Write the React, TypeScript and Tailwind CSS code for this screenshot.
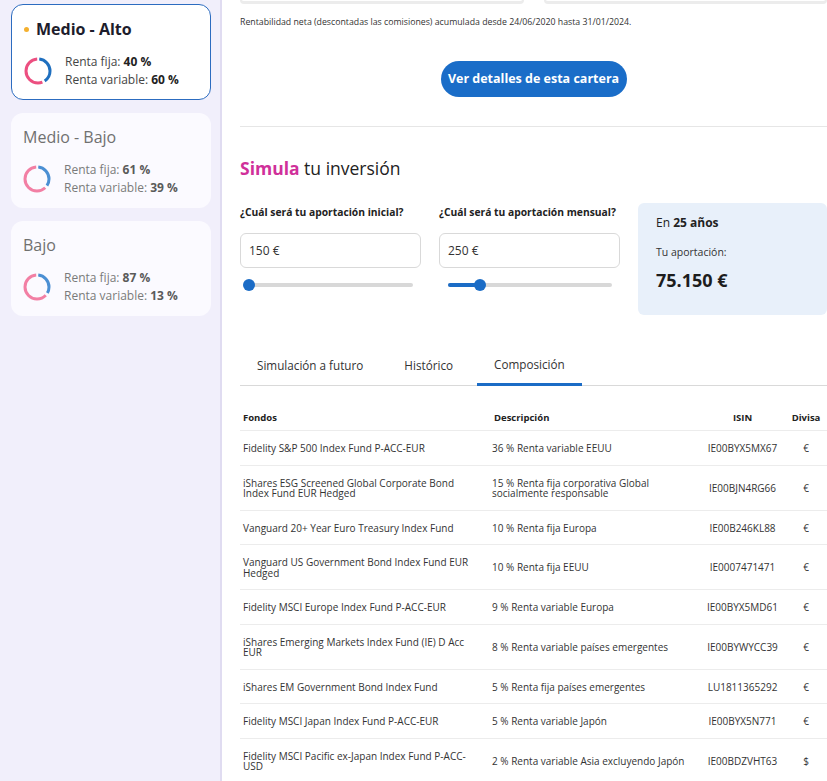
import React from "react";

type Profile = {
  title: string;
  fija: number;
  variable: number;
  selected?: boolean;
  blueFrac: number;
};

const profiles: Profile[] = [
  { title: "Medio - Alto", fija: 40, variable: 60, selected: true, blueFrac: 0.42 },
  { title: "Medio - Bajo", fija: 61, variable: 39, blueFrac: 0.36 },
  { title: "Bajo", fija: 87, variable: 13, blueFrac: 0.35 },
];

function Donut({ blueFrac, selected }: { blueFrac: number; selected?: boolean }) {
  const r = 12;
  const c = 2 * Math.PI * r;
  const gap = 0.035 * c;
  const blueLen = blueFrac * c - gap;
  const pinkLen = (1 - blueFrac) * c - gap;
  const blue = selected ? "#1f6fbf" : "#4b8fd3";
  const pink = selected ? "#ec4f80" : "#f27fa4";
  return (
    <svg width="28" height="28" viewBox="0 0 28 28" className="shrink-0">
      <g transform="rotate(-90 14 14)">
        <circle
          cx="14"
          cy="14"
          r={r}
          fill="none"
          stroke={blue}
          strokeWidth="3"
          strokeDasharray={`${blueLen} ${c - blueLen}`}
          strokeDashoffset={-gap / 2}
        />
        <circle
          cx="14"
          cy="14"
          r={r}
          fill="none"
          stroke={pink}
          strokeWidth="3"
          strokeDasharray={`${pinkLen} ${c - pinkLen}`}
          strokeDashoffset={-(blueFrac * c + gap / 2)}
        />
      </g>
    </svg>
  );
}

function ProfileCard({ p }: { p: Profile }) {
  return (
    <div
      className={
        p.selected
          ? "h-[96px] rounded-[12px] border border-[#2c6cc0] bg-white pt-[13px] pl-[12px]"
          : "h-[95px] rounded-[12px] bg-[#fbfaff] pt-[13px] pl-[12px]"
      }
    >
      <div className="flex h-[22px] items-center">
        {p.selected && <span className="mr-[7px] h-[5px] w-[5px] rounded-full bg-[#f4b02f]" />}
        <span
          className={
            p.selected
              ? "text-[16px] font-bold text-[#1d1d2c]"
              : "text-[16px] text-[#707070]"
          }
        >
          {p.title}
        </span>
      </div>
      <div className="mt-[13px] flex items-center gap-[13px]">
        <Donut blueFrac={p.blueFrac} selected={p.selected} />
        <div
          className={
            p.selected
              ? "text-[12px] leading-[18px] text-[#444]"
              : "text-[12px] leading-[18px] text-[#7a7a7a]"
          }
        >
          <div>
            Renta fija:{" "}
            <span className={p.selected ? "font-bold text-[#222]" : "font-bold text-[#5a5a5a]"}>
              {p.fija} %
            </span>
          </div>
          <div>
            Renta variable:{" "}
            <span className={p.selected ? "font-bold text-[#222]" : "font-bold text-[#5a5a5a]"}>
              {p.variable} %
            </span>
          </div>
        </div>
      </div>
    </div>
  );
}

type Row = { fondo: string[]; desc: string[]; isin: string; divisa: string };

const rows: Row[] = [
  { fondo: ["Fidelity S&P 500 Index Fund P-ACC-EUR"], desc: ["36 % Renta variable EEUU"], isin: "IE00BYX5MX67", divisa: "€" },
  {
    fondo: ["iShares ESG Screened Global Corporate Bond", "Index Fund EUR Hedged"],
    desc: ["15 % Renta fija corporativa Global", "socialmente responsable"],
    isin: "IE00BJN4RG66",
    divisa: "€",
  },
  { fondo: ["Vanguard 20+ Year Euro Treasury Index Fund"], desc: ["10 % Renta fija Europa"], isin: "IE00B246KL88", divisa: "€" },
  {
    fondo: ["Vanguard US Government Bond Index Fund EUR", "Hedged"],
    desc: ["10 % Renta fija EEUU"],
    isin: "IE0007471471",
    divisa: "€",
  },
  { fondo: ["Fidelity MSCI Europe Index Fund P-ACC-EUR"], desc: ["9 % Renta variable Europa"], isin: "IE00BYX5MD61", divisa: "€" },
  {
    fondo: ["iShares Emerging Markets Index Fund (IE) D Acc", "EUR"],
    desc: ["8 % Renta variable países emergentes"],
    isin: "IE00BYWYCC39",
    divisa: "€",
  },
  { fondo: ["iShares EM Government Bond Index Fund"], desc: ["5 % Renta fija países emergentes"], isin: "LU1811365292", divisa: "€" },
  { fondo: ["Fidelity MSCI Japan Index Fund P-ACC-EUR"], desc: ["5 % Renta variable Japón"], isin: "IE00BYX5N771", divisa: "€" },
  {
    fondo: ["Fidelity MSCI Pacific ex-Japan Index Fund P-ACC-", "USD"],
    desc: ["2 % Renta variable Asia excluyendo Japón"],
    isin: "IE00BDZVHT63",
    divisa: "$",
  },
];

function Lines({ lines }: { lines: string[] }) {
  return (
    <div className="whitespace-nowrap">
      {lines.map((l, i) => (
        <div key={i}>{l}</div>
      ))}
    </div>
  );
}

function Slider({ pct }: { pct: number }) {
  return (
    <div className="relative ml-[9px] mt-[11px] h-[11px] w-[164px]">
      <div className="absolute left-0 right-0 top-[4px] h-[4px] rounded-full bg-[#d8d8d8]" />
      <div
        className="absolute left-0 top-[4px] h-[4px] rounded-full bg-[#1b6cc6]"
        style={{ width: `${pct}%` }}
      />
      <div
        className="absolute top-0 h-[12px] w-[12px] -translate-x-1/2 rounded-full bg-[#1b6cc6]"
        style={{ left: `${pct}%` }}
      />
    </div>
  );
}

export default function App() {
  return (
    <div
      className="flex h-[781px] w-[827px] overflow-hidden bg-white text-[#222]"
      style={{ fontFamily: '"Open Sans", "Noto Sans", sans-serif' }}
    >
      <aside className="flex h-full w-[222px] shrink-0 flex-col gap-[13px] border-r-[2px] border-[#e0dcf1] bg-[#f1effb] pl-[11px] pr-[9px] pt-[4px]">
        {profiles.map((p) => (
          <ProfileCard key={p.title} p={p} />
        ))}
      </aside>

      <main className="w-[605px] shrink-0 overflow-hidden pl-[18px]">
        <div className="w-[587px]">
          <div className="flex h-[4px] gap-[20px]">
            <div className="h-[4px] w-[284px] rounded-b-[10px] border-x-2 border-b-[3px] border-[#ececec]" />
            <div className="h-[4px] w-[283px] rounded-b-[10px] border-x-2 border-b-[3px] border-[#ececec]" />
          </div>

          <p className="mt-[12px] text-[8.75px] leading-[12px] text-[#333]">
            Rentabilidad neta (descontadas las comisiones) acumulada desde 24/06/2020 hasta 31/01/2024.
          </p>

          <div className="mt-[33px] flex justify-center">
            <button className="h-[36px] w-[186px] rounded-full bg-[#1a6dc8] text-[12.5px] font-bold text-white">
              Ver detalles de esta cartera
            </button>
          </div>

          <div className="mt-[29px] h-px bg-[#e6e6e6]" />

          <h2 className="mt-[28px] text-[17.5px] leading-[26px] text-[#222]">
            <span className="font-bold text-[#d0309a]">Simula</span> tu inversión
          </h2>

          <div className="mt-[22px] grid grid-cols-[181px_181px_189px] items-start gap-[18px]">
            <div className="pt-px">
              <div className="text-[10.3px] font-bold leading-[16px] text-[#222]">
                ¿Cuál será tu aportación inicial?
              </div>
              <div className="mt-[13px] flex h-[35px] items-center rounded-[6px] border border-[#d9d9d9] pl-[8px] text-[12px] text-[#333]">
                150 €
              </div>
              <Slider pct={0} />
            </div>
            <div className="pt-px">
              <div className="text-[10.3px] font-bold leading-[16px] text-[#222]">
                ¿Cuál será tu aportación mensual?
              </div>
              <div className="mt-[13px] flex h-[35px] items-center rounded-[6px] border border-[#d9d9d9] pl-[8px] text-[12px] text-[#333]">
                250 €
              </div>
              <Slider pct={19.5} />
            </div>
            <div className="h-[112px] rounded-[6px] bg-[#e8f0fa] pl-[18px] pt-[12px]">
              <div className="text-[12px] leading-[16px] text-[#222]">
                En <span className="font-bold">25 años</span>
              </div>
              <div className="mt-[14px] text-[10.5px] leading-[15px] text-[#333]">Tu aportación:</div>
              <div className="mt-[8px] text-[18px] font-bold leading-[24px] text-[#1d1d1d]">75.150 €</div>
            </div>
          </div>

          <div className="mt-[27px] flex h-[44px] gap-[7px] border-b border-[#d9d9d9] text-[11.7px] text-[#333]">
            <div className="flex items-center px-[17px] pt-[4px]">Simulación a futuro</div>
            <div className="flex items-center px-[17px] pt-[4px]">Histórico</div>
            <div className="-mb-px flex items-center border-b-[3px] border-[#1b6cc6] px-[17px] pt-[5px]">
              Composición
            </div>
          </div>

          <div className="mt-[20px] text-[10px] text-[#333]">
            <div className="grid h-[25px] grid-cols-[248px_212px_85px_42px] items-center border-b border-[#ececec] text-[9.5px] font-bold text-[#222]">
              <div className="pl-[3px]">Fondos</div>
              <div className="pl-[6px]">Descripción</div>
              <div className="text-center">ISIN</div>
              <div className="text-center">Divisa</div>
            </div>
            {rows.map((r) => (
              <div
                key={r.isin}
                className="grid grid-cols-[248px_212px_85px_42px] items-center border-b border-[#ececec] pb-[11px] pt-[12px] leading-[10.5px]"
              >
                <div className="pl-[3px]">
                  <Lines lines={r.fondo} />
                </div>
                <div className="pl-[4px]">
                  <Lines lines={r.desc} />
                </div>
                <div className="text-center">{r.isin}</div>
                <div className="text-center">{r.divisa}</div>
              </div>
            ))}
          </div>
        </div>
      </main>
    </div>
  );
}
